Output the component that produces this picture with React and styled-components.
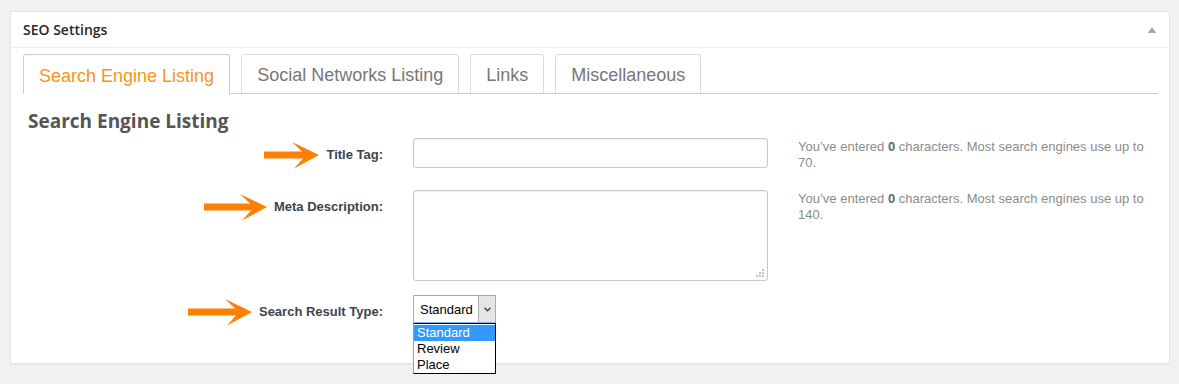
import React from 'react';
import styled, { createGlobalStyle } from 'styled-components';

const GlobalStyle = createGlobalStyle`
  body {
    margin: 0;
    background: #f1f1f1;
    font-family: "Liberation Sans", Arial, sans-serif;
  }
`;

const tabs = ['Search Engine Listing', 'Social Networks Listing', 'Links', 'Miscellaneous'];

function Arrow({ width }) {
  const w = width;
  return (
    <svg width={w} height="28" viewBox={`0 0 ${w} 28`}>
      <polygon
        fill="#ff7f00"
        points={`0,10.5 ${w - 17},10.5 ${w - 27},1 ${w},14 ${w - 25},27.5 ${w - 16},17.5 0,17.5`}
      />
    </svg>
  );
}

function HelpText({ max }) {
  return (
    <Help>
      You’ve entered <Count>0</Count> characters. Most search engines use up to {max}.
    </Help>
  );
}

export default function App() {
  return (
    <Page>
      <GlobalStyle />
      <Panel>
        <PanelHeader>
          <PanelTitle>SEO Settings</PanelTitle>
          <Toggle />
        </PanelHeader>
        <PanelBody>
          <TabBar>
            {tabs.map((t, i) => (
              <Tab key={t} $active={i === 0}>{t}</Tab>
            ))}
          </TabBar>
          <SectionTitle>Search Engine Listing</SectionTitle>

          <Row $space={19}>
            <LabelCell>
              <Arrow width={55} />
              <Label>Title Tag:</Label>
            </LabelCell>
            <Field>
              <TextInput type="text" />
            </Field>
            <HelpText max={70} />
          </Row>

          <Row $space={14}>
            <LabelCell>
              <Arrow width={63} />
              <Label>Meta Description:</Label>
            </LabelCell>
            <Field>
              <AreaWrap>
                <TextArea />
                <Grip width="9" height="9" viewBox="0 0 9 9">
                  <rect x="6" y="0" width="2" height="2" fill="#c2c2c2" />
                  <rect x="3" y="3" width="2" height="2" fill="#c2c2c2" />
                  <rect x="6" y="3" width="2" height="2" fill="#c2c2c2" />
                  <rect x="0" y="6" width="2" height="2" fill="#c2c2c2" />
                  <rect x="3" y="6" width="2" height="2" fill="#c2c2c2" />
                  <rect x="6" y="6" width="2" height="2" fill="#c2c2c2" />
                </Grip>
              </AreaWrap>
            </Field>
            <HelpText max={140} />
          </Row>

          <Row $space={0}>
            <LabelCell>
              <Arrow width={64} />
              <Label>Search Result Type:</Label>
            </LabelCell>
            <Field>
              <SelectBox>
                <SelectValue>Standard</SelectValue>
                <DropButton>
                  <svg width="7" height="5" viewBox="0 0 7 5">
                    <polyline points="0.5,0.8 3.5,3.8 6.5,0.8" fill="none" stroke="#444" strokeWidth="1.4" />
                  </svg>
                </DropButton>
                <ListBox>
                  <Option $selected>Standard</Option>
                  <Option>Review</Option>
                  <Option>Place</Option>
                </ListBox>
              </SelectBox>
            </Field>
          </Row>
        </PanelBody>
      </Panel>
    </Page>
  );
}

const Page = styled.div`
  padding: 11px 9px 20px 10px;
  min-height: 384px;
  box-sizing: border-box;
`;

const Panel = styled.div`
  height: 353px;
  box-sizing: border-box;
  background: #fff;
  border: 1px solid #e5e5e5;
  box-shadow: 0 1px 1px rgba(0, 0, 0, 0.04);
`;

const PanelHeader = styled.div`
  height: 35px;
  display: flex;
  align-items: center;
  justify-content: space-between;
  padding: 0 13px 0 12px;
  border-bottom: 1px solid #eee;
`;

const PanelTitle = styled.h2`
  margin: 0;
  font-family: "Open Sans", sans-serif;
  font-size: 14px;
  font-weight: 600;
  color: #23282d;
`;

const Toggle = styled.span`
  width: 0;
  height: 0;
  border-left: 4px solid transparent;
  border-right: 4px solid transparent;
  border-bottom: 6px solid #a0a5aa;
`;

const PanelBody = styled.div`
  padding: 6px 11px 0 12px;
`;

const TabBar = styled.div`
  display: flex;
  gap: 11px;
  height: 39px;
  border-bottom: 1px solid #ccc;
`;

const Tab = styled.div`
  box-sizing: border-box;
  padding: 3px 15px 0;
  display: flex;
  align-items: center;
  border: 1px solid #d6d6d6;
  border-bottom: none;
  border-radius: 3px 3px 0 0;
  background: #fff;
  font-size: 18px;
  color: ${p => (p.$active ? '#f7941d' : '#777')};
  height: ${p => (p.$active ? '40px' : '39px')};
  border-color: ${p => (p.$active ? '#ccc' : '#dcdcdc')};
`;

const SectionTitle = styled.h3`
  margin: 15px 0 5px 5px;
  font-family: "Open Sans", sans-serif;
  font-size: 19px;
  line-height: 24px;
  font-weight: 700;
  color: #555;
`;

const Row = styled.div`
  display: flex;
  align-items: flex-start;
  gap: 30px;
  margin-bottom: ${p => p.$space}px;
`;

const LabelCell = styled.div`
  width: 360px;
  flex: none;
  padding-top: 3px;
  display: flex;
  align-items: center;
  justify-content: flex-end;
  gap: 7px;
`;

const Label = styled.label`
  font-size: 13px;
  line-height: 16px;
  font-weight: 700;
  color: #3d4450;
`;

const Field = styled.div`
  width: 355px;
  flex: none;
`;

const TextInput = styled.input`
  display: block;
  width: 100%;
  height: 30px;
  box-sizing: border-box;
  border: 1px solid #c8c8c8;
  border-radius: 3px;
  box-shadow: inset 0 1px 2px rgba(0, 0, 0, 0.07);
  outline: none;
`;

const AreaWrap = styled.div`
  position: relative;
`;

const TextArea = styled.textarea`
  display: block;
  width: 100%;
  height: 91px;
  box-sizing: border-box;
  border: 1px solid #c8c8c8;
  border-radius: 3px;
  box-shadow: inset 0 1px 2px rgba(0, 0, 0, 0.07);
  resize: none;
  outline: none;
`;

const Grip = styled.svg`
  position: absolute;
  right: 3px;
  bottom: 3px;
`;

const Help = styled.p`
  margin: 0;
  padding-top: 1px;
  width: 352px;
  font-size: 13px;
  line-height: 16px;
  color: #8c8c8c;
`;

const Count = styled.b`
  color: #666;
`;

const SelectBox = styled.div`
  position: relative;
  width: 83px;
  height: 28px;
  box-sizing: border-box;
  display: flex;
  border: 1px solid #7eb4ea;
  background: #fff;
  font-size: 13px;
`;

const SelectValue = styled.span`
  flex: 1;
  display: flex;
  align-items: center;
  padding-left: 6px;
  color: #000;
`;

const DropButton = styled.span`
  width: 16px;
  display: flex;
  align-items: center;
  justify-content: center;
  background: #e5e5e5;
  border-left: 1px solid #acacac;
`;

const ListBox = styled.div`
  position: absolute;
  z-index: 2;
  top: 27px;
  left: -1px;
  width: 83px;
  box-sizing: border-box;
  border: 1px solid #000;
  border-left-color: #a0a0a0;
  background: #fff;
  padding-top: 1px;
`;

const Option = styled.div`
  height: 16px;
  line-height: 16px;
  padding-left: 3px;
  font-size: 13px;
  background: ${p => (p.$selected ? '#3399ff' : 'transparent')};
  color: ${p => (p.$selected ? '#fff' : '#000')};
`;
